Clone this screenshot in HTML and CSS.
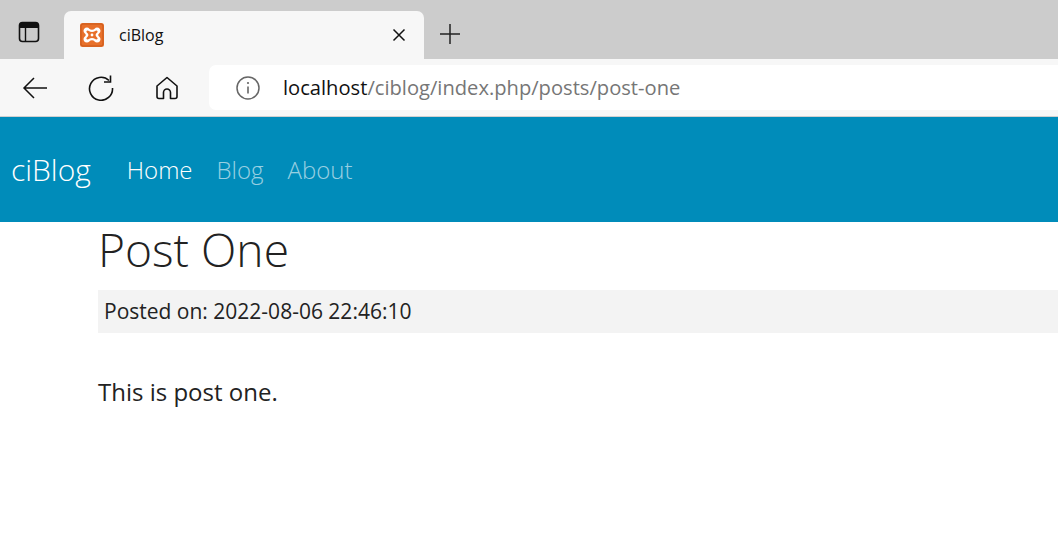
FILE: index.html
```html
<!DOCTYPE html>
<html lang="en">
<head>
<meta charset="utf-8">
<title>ciBlog</title>
<link rel="stylesheet" href="styles.css">
</head>
<body>
<div class="tabstrip">
  <div class="tabside">
    <svg class="ico" width="24" height="24" viewBox="0 0 24 24"><rect x="2.500" y="2.500" width="19" height="19" rx="3" fill="none" stroke="#111" stroke-width="1.600"/><path d="M2.500 8h19V5a2.500 2.500 0 0 0-2.500-2.500H5A2.500 2.500 0 0 0 2.500 5z" fill="#111"/><path d="M8.500 8v13" stroke="#111" stroke-width="1.400"/></svg>
  </div>
  <div class="tab">
    <svg class="favicon" width="24" height="24" viewBox="0 0 24 24"><rect width="24" height="24" rx="2.500" fill="#e8702a"/><rect x="1" y="1" width="22" height="22" rx="2" fill="none" stroke="#c9591b" stroke-width="1"/><path d="M7 4.500c2 0 2.600 2.300 5 2.300s3-2.300 5-2.300c2.500 0 3.500 2 3.500 3.600 0 2-2.300 2.400-2.300 3.900s2.300 1.900 2.300 3.900c0 1.600-1 3.600-3.500 3.600-2 0-2.600-2.300-5-2.300s-3 2.300-5 2.300c-2.500 0-3.500-2-3.500-3.600 0-2 2.300-2.400 2.300-3.900S3.500 10.100 3.500 8.100c0-1.600 1-3.600 3.500-3.600z" fill="#fff"/><path d="M7.500 7.500c1.300 0 2 1.600 4.500 1.600s3.200-1.600 4.500-1.600c1 0 1.200.8 1 1.400-.4 1-1.900 1.500-1.900 3.100s1.500 2.100 1.900 3.100c.2.600 0 1.400-1 1.400-1.300 0-2-1.600-4.500-1.600s-3.200 1.600-4.500 1.600c-1 0-1.200-.8-1-1.400.4-1 1.900-1.500 1.900-3.100S6.900 9.900 6.500 8.900c-.2-.6 0-1.400 1-1.400z" fill="#e8702a"/><circle cx="12" cy="12" r="1.400" fill="#fff"/></svg>
    <span class="tabtitle">ciBlog</span>
    <svg class="close" width="14" height="14" viewBox="0 0 14 14"><path d="M1.500 1.500l11 11M12.500 1.500l-11 11" stroke="#111" stroke-width="1.500"/></svg>
  </div>
  <svg class="newtab" width="22" height="22" viewBox="0 0 22 22"><path d="M11 1v20M1 11h20" stroke="#222" stroke-width="1.500"/></svg>
</div>
<div class="toolbar">
  <svg class="tool-back" width="26" height="24" viewBox="0 0 26 24"><path d="M25 12H2M12 2L2 12l10 10" fill="none" stroke="#111" stroke-width="1.500"/></svg>
  <svg class="tool-reload" width="26" height="26" viewBox="0 0 26 26"><path d="M21 5.500A11.500 11.500 0 1 0 24.500 13" fill="none" stroke="#111" stroke-width="1.600"/><path d="M22.500 0.500v6.500h-6.500" fill="none" stroke="#111" stroke-width="1.600"/></svg>
  <svg class="tool-home" width="24" height="24" viewBox="0 0 24 24"><path d="M12 1.500L2 10v10.500a2 2 0 0 0 2 2h4.500v-6a3.500 3.500 0 0 1 7 0v6H20a2 2 0 0 0 2-2V10z" fill="none" stroke="#111" stroke-width="1.600" stroke-linejoin="round"/></svg>
  <div class="address">
    <svg class="info" width="24" height="24" viewBox="0 0 24 24"><circle cx="12" cy="12" r="11" fill="none" stroke="#666" stroke-width="1.500"/><path d="M12 10.500v7" stroke="#666" stroke-width="1.600"/><circle cx="12" cy="7" r="1.100" fill="#666"/></svg>
    <span class="url"><span class="host">localhost</span>/ciblog/index.php/posts/post-one</span>
  </div>
</div>
<nav class="navbar">
  <a class="brand" href="#">ciBlog</a>
  <a class="navlink active" href="#">Home</a>
  <a class="navlink" href="#">Blog</a>
  <a class="navlink" href="#">About</a>
</nav>
<main class="container">
  <h2 class="title">Post One</h2>
  <small class="meta">Posted on: 2022-08-06 22:46:10</small>
  <p class="body-text">This is post one.</p>
</main>
</body>
</html>
```
FILE: styles.css
```css
html, body { margin: 0; padding: 0; }
body { width: 1058px; height: 536px; overflow: hidden; background: #fff; font-family: "Open Sans", sans-serif; color: #222; }
svg { display: block; flex: none; }

.tabstrip { display: flex; align-items: flex-end; height: 59px; background: #cccccc; }
.tabside { width: 64px; height: 48px; display: flex; padding: 9px 0 0 17px; box-sizing: border-box; }
.tab { width: 360px; height: 48px; background: #f7f7f7; border-radius: 7px 7px 0 0; display: flex; align-items: center; padding: 0 18px 0 16px; box-sizing: border-box; font-family: "Open Sans", sans-serif; }
.favicon { margin-top: -1px; }
.tabtitle { font-size: 16px; color: #111; margin-left: 15px; flex: 1; margin-top: -1px; }
.close { margin-top: -1px; }
.newtab { margin: 0 0 14px 15px; }

.toolbar { display: flex; align-items: center; height: 58px; background: #f7f7f7; border-bottom: 1px solid #d0d0d0; box-sizing: border-box; }
.tool-back { margin-left: 22px; }
.tool-reload { margin-left: 40px; }
.tool-home { margin-left: 41px; }
.address { flex: 1; height: 45px; margin-left: 30px; background: #fff; border-radius: 7px 0 0 7px; display: flex; align-items: center; padding-left: 27px; }
.url { font-family: "Open Sans", sans-serif; font-size: 20.15px; color: #767676; margin: 0 0 2px 23px; }
.host { color: #111; }

.navbar { height: 105px; background: #008cba; display: flex; align-items: center; padding-left: 11px; }
.brand { font-size: 30px; font-weight: 300; color: #fff; text-decoration: none; margin-right: 36px; }
.navlink { font-size: 24px; font-weight: 300; color: rgba(255,255,255,.6); text-decoration: none; margin-right: 24px; }
.navlink.active { color: #fff; }

.container { padding-left: 98px; }
.title { font-size: 46.200px; font-weight: 300; line-height: 56px; margin: 0 0 12px; color: #222; }
.meta { display: block; background: #f3f3f3; height: 43px; line-height: 43px; padding-left: 6px; font-size: 21px; }
.body-text { font-size: 24px; margin: 44px 0 0; line-height: 30px; }
```
